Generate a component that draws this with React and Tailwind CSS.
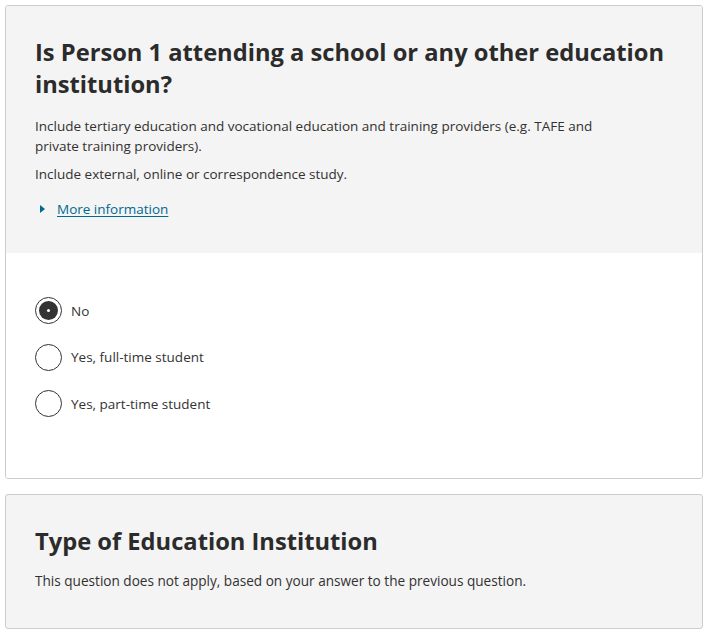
import React, { useState } from 'react';

const options = ['No', 'Yes, full-time student', 'Yes, part-time student'];

function Radio({ label, checked, onSelect }) {
    return (
        <label className="flex items-center gap-[9px] cursor-pointer h-[27px]" onClick={onSelect}>
            <span className="w-[27px] h-[27px] rounded-full border border-[#333] bg-white flex items-center justify-center shrink-0">
                {checked && (
                    <span className="w-[19px] h-[19px] rounded-full bg-[#333] flex items-center justify-center">
                        <span className="w-[3px] h-[3px] rounded-full bg-white" />
                    </span>
                )}
            </span>
            <span className="text-[13.5px] text-[#333] pt-px">{label}</span>
        </label>
    );
}

export default function App() {
    const [answer, setAnswer] = useState('No');

    return (
        <div className="min-h-screen bg-white pt-[5px] pl-[5px] pr-[4px] pb-[5px] text-[#323130]" style={{ fontFamily: '"Open Sans", "Noto Sans", sans-serif' }}>
            <div className="border border-[#cccccc] rounded-[3px] overflow-hidden">
                <div className="bg-[#f4f4f4] px-[29px] pt-[30px] pb-[34px]">
                    <h2 className="text-[23.7px] leading-[32px] font-bold text-[#2b2b2b] whitespace-nowrap">
                        Is Person 1 attending a school or any other education
                        <br />
                        institution?
                    </h2>
                    <p className="mt-4 text-[13.5px] leading-5 max-w-[575px]">
                        Include tertiary education and vocational education and training providers (e.g. TAFE and private training providers).
                    </p>
                    <p className="mt-2 text-[13.5px] leading-5">Include external, online or correspondence study.</p>
                    <div className="mt-[15px] flex items-center h-5">
                        <svg width="5" height="8" viewBox="0 0 5 8" className="ml-[5px] mr-[12px]">
                            <path d="M0 0 L5 4 L0 8 Z" fill="#00698f" />
                        </svg>
                        <a href="#" className="text-[13.5px] text-[#00698f] underline underline-offset-2">More information</a>
                    </div>
                </div>
                <div className="bg-white px-[29px] pt-[44px] pb-[61px] flex flex-col gap-[19.5px]">
                    {options.map((o) => (
                        <Radio key={o} label={o} checked={answer === o} onSelect={() => setAnswer(o)} />
                    ))}
                </div>
            </div>

            <div className="mt-[15px] border border-[#cccccc] rounded-[3px] bg-[#f4f4f4] px-[29px] pt-[30px] pb-[37px]">
                <h2 className="text-[23.7px] leading-[32px] font-bold text-[#2b2b2b]">Type of Education Institution</h2>
                <p className="mt-[14px] text-[13.6px] leading-5">This question does not apply, based on your answer to the previous question.</p>
            </div>
        </div>
    );
}
